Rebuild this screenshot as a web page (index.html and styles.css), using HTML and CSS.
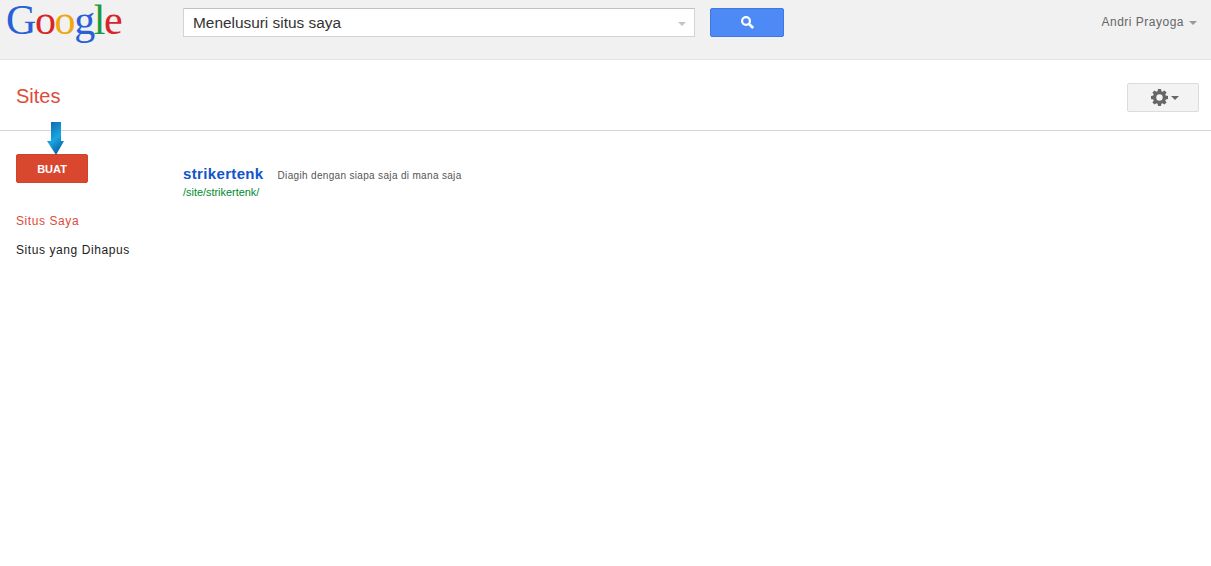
FILE: index.html
```html
<!DOCTYPE html>
<html lang="id">
<head>
<meta charset="utf-8">
<title>Google Sites</title>
<link rel="stylesheet" href="styles.css">
</head>
<body>
<header class="topbar">
  <div class="logo"><span class="g-blue">G</span><span class="g-red">o</span><span class="g-yellow">o</span><span class="g-blue">g</span><span class="g-green">l</span><span class="g-red">e</span></div>
  <div class="search">
    <span class="search-text">Menelusuri situs saya</span>
    <span class="caret caret-light"></span>
  </div>
  <button class="search-btn" aria-label="Telusuri">
    <svg width="15" height="15" viewBox="0 0 15 15"><circle cx="6" cy="6" r="3.9" fill="none" stroke="#fff" stroke-width="2.2"/><path d="M9 9l4.2 4" stroke="#fff" stroke-width="2.6" fill="none"/></svg>
  </button>
  <div class="user"><span>Andri Prayoga</span><span class="caret"></span></div>
</header>
<section class="titlebar">
  <h1 class="title">Sites</h1>
  <button class="gear-btn" aria-label="Setelan">
    <svg width="17" height="17" viewBox="0 0 18 18"><path fill="#666" fill-rule="evenodd" d="M7.4 0h3.2l.4 2.4 1.2.5 2-1.4 2.3 2.3-1.4 2 .5 1.2 2.4.4v3.2l-2.4.4-.5 1.2 1.4 2-2.3 2.3-2-1.4-1.2.5-.4 2.4H7.4L7 15.6l-1.2-.5-2 1.4-2.3-2.3 1.4-2-.5-1.2L0 10.6V7.4L2.4 7l.5-1.2-1.4-2 2.3-2.3 2 1.4L7 2.4zM9 5.6a3.4 3.4 0 1 0 0 6.8 3.4 3.4 0 0 0 0-6.8z"/></svg>
    <span class="caret caret-dark"></span>
  </button>
</section>
<main class="content">
  <aside class="sidebar">
    <button class="create-btn">BUAT</button>
    <svg class="arrow" width="17" height="34" viewBox="0 0 17 34">
      <defs>
        <linearGradient id="arrowFill" x1="0" y1="0" x2="0.45" y2="1">
          <stop offset="0" stop-color="#0d5fa6"/>
          <stop offset="0.6" stop-color="#19a6e2"/>
          <stop offset="1" stop-color="#0b67ab"/>
        </linearGradient>
      </defs>
      <path fill="url(#arrowFill)" d="M4 0h10v19h3L9 33 0 19h4z"/>
    </svg>
    <nav class="side-nav">
      <a class="side-link side-active">Situs Saya</a>
      <a class="side-link">Situs yang Dihapus</a>
    </nav>
  </aside>
  <div class="site-list">
    <div class="site-row">
      <a class="site-name">strikertenk</a>
      <span class="site-desc">Diagih dengan siapa saja di mana saja</span>
    </div>
    <div class="site-url">/site/strikertenk/</div>
  </div>
</main>
</body>
</html>
```
FILE: styles.css
```css
* { box-sizing: border-box; }
html, body { margin: 0; padding: 0; background: #fff; }
body { font-family: "Liberation Sans", Arial, sans-serif; height: 566px; overflow: hidden; }

.topbar {
  display: flex;
  align-items: flex-start;
  height: 60px;
  background: #f1f1f1;
  border-bottom: 1px solid #e3e3e3;
  padding-top: 8px;
}
.logo {
  width: 183px;
  margin-top: -8px;
  padding-left: 6px;
  font-family: "Liberation Serif", serif;
  font-size: 42px;
  line-height: 40px;
  letter-spacing: -1.4px;
  white-space: nowrap;
}
.g-blue { color: #2a5fd8; }
.g-red { color: #d8242a; }
.g-yellow { color: #eca810; }
.g-green { color: #1d9a3c; }

.search {
  display: flex;
  align-items: center;
  justify-content: space-between;
  width: 512px;
  height: 29px;
  background: #fff;
  border: 1px solid #d4d4d4;
  border-top-color: #c0c0c0;
  padding: 0 8px 0 9px;
  font-size: 15.4px;
  color: #333;
}
.caret {
  display: inline-block;
  width: 0;
  height: 0;
  border-left: 4px solid transparent;
  border-right: 4px solid transparent;
  border-top: 4px solid #999;
}
.caret-light { border-top-color: #c4c4c4; margin-top: 2px; }
.caret-dark { border-top-color: #666; }

.search-btn {
  display: flex;
  align-items: center;
  justify-content: center;
  width: 74px;
  height: 29px;
  margin-left: 15px;
  padding: 0;
  background: #4d8af6;
  border: 1px solid #3f79e0;
  border-radius: 2px;
}

.user {
  display: flex;
  align-items: center;
  gap: 5px;
  margin-left: auto;
  padding: 7px 14px 0 0;
  font-size: 12px;
  line-height: 15px;
  letter-spacing: 0.5px;
  color: #666;
}

.titlebar {
  display: flex;
  align-items: center;
  justify-content: space-between;
  height: 71px;
  padding: 3px 12px 0 16px;
  border-bottom: 1px solid #d8d8d8;
}
.title {
  margin: 0;
  font-size: 20px;
  font-weight: 400;
  color: #dd4b39;
}
.gear-btn {
  display: flex;
  align-items: center;
  justify-content: center;
  gap: 3px;
  width: 72px;
  height: 29px;
  margin-top: 2px;
  padding: 0 0 0 4px;
  background: #f3f3f3;
  border: 1px solid #dcdcdc;
  border-radius: 2px;
}

.content { display: flex; align-items: flex-start; }
.sidebar {
  position: relative;
  width: 183px;
  padding: 23px 0 0 16px;
}
.create-btn {
  display: block;
  width: 72px;
  height: 29px;
  padding: 0;
  background: #d9472f;
  border: 1px solid #cf4430;
  border-radius: 2px;
  color: #fff;
  font-family: inherit;
  font-size: 11px;
  font-weight: 700;
}
.arrow { position: absolute; left: 47px; top: -9px; }
.side-nav { display: flex; flex-direction: column; margin-top: 24px; }
.side-link {
  font-size: 12px;
  line-height: 29px;
  letter-spacing: 0.58px;
  color: #222;
}
.side-active { color: #dd4b39; }

.site-list { padding-top: 33px; }
.site-row { display: flex; align-items: baseline; gap: 14px; }
.site-name {
  font-size: 15px;
  line-height: 19px;
  font-weight: 700;
  letter-spacing: 0.35px;
  color: #1155cc;
}
.site-desc { font-size: 10px; letter-spacing: 0.33px; color: #555; }
.site-url { margin-top: 3px; font-size: 10.9px; line-height: 13px; color: #008a2e; }
```
